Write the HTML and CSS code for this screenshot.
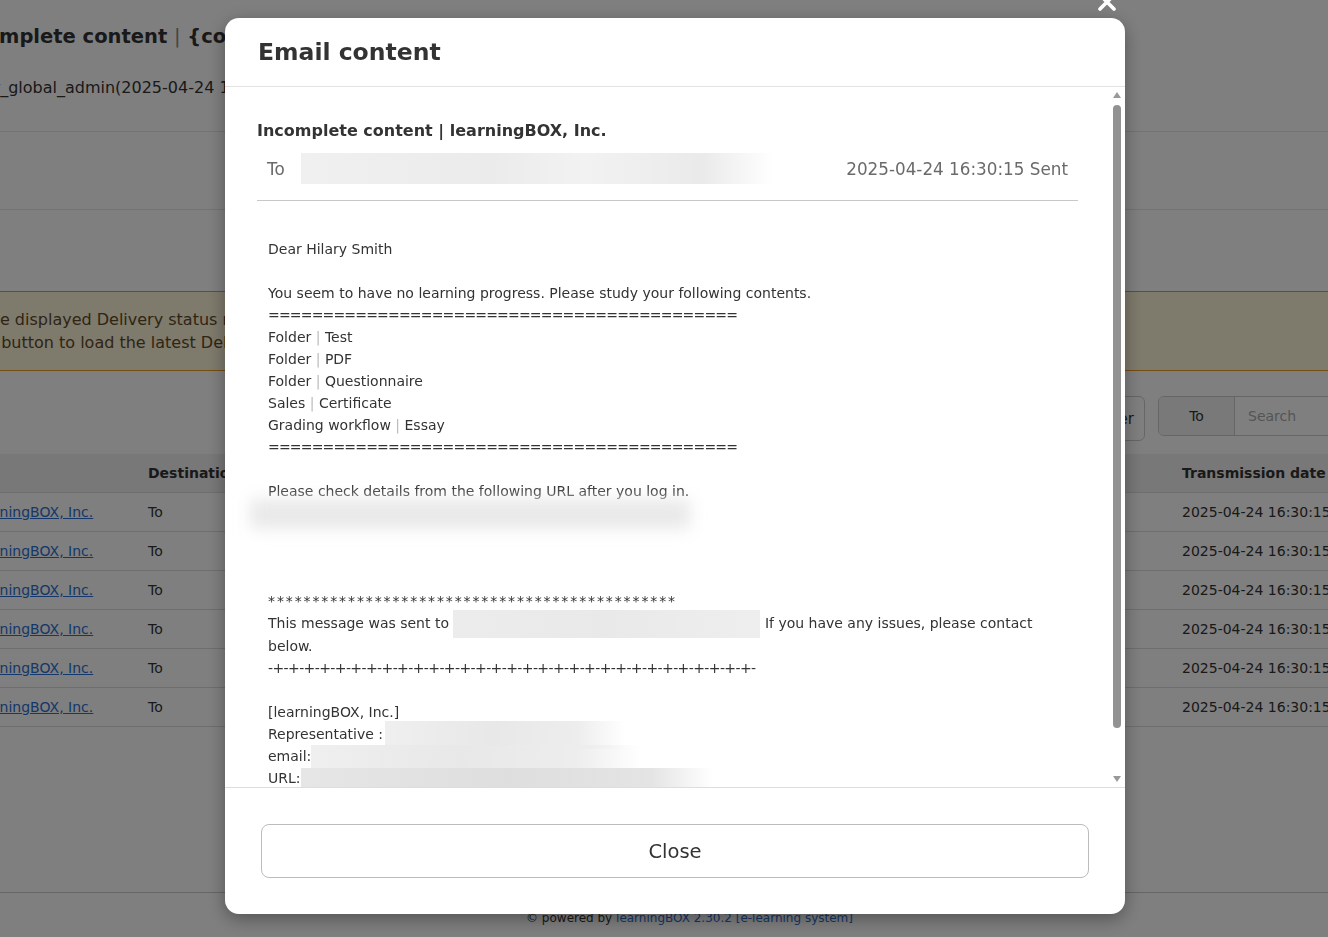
FILE: index.html
```html
<!DOCTYPE html>
<html lang="en">
<head>
    <meta charset="UTF-8">
    <meta name="viewport" content="width=device-width, initial-scale=1.0">
    <title>Email delivery status</title>
    <link rel="stylesheet" href="styles.css">
</head>
<body>
    <div class="page">
        <h2 class="page-title">Incomplete content <span class="sep">|</span> {contents name}</h2>
        <p class="sender">tester_global_admin(2025-04-24 16:30:15)</p>

        <div class="summary"></div>

        <div class="alert">
            The displayed Delivery status may not be the latest.<br>
            to button to load the latest Delivery status.
        </div>

        <div class="toolbar">
            <button class="btn-filter">Filter</button>
            <div class="search-group">
                <span class="search-type">To</span>
                <input class="search-input" type="text" placeholder="Search">
            </div>
        </div>

        <table class="list">
            <thead>
                <tr><th class="col-subject"></th><th class="col-dest">Destination</th><th>Transmission date</th></tr>
            </thead>
            <tbody>
                <tr><td><a href="#">learningBOX, Inc.</a></td><td>To</td><td>2025-04-24 16:30:15</td></tr>
                <tr><td><a href="#">learningBOX, Inc.</a></td><td>To</td><td>2025-04-24 16:30:15</td></tr>
                <tr><td><a href="#">learningBOX, Inc.</a></td><td>To</td><td>2025-04-24 16:30:15</td></tr>
                <tr><td><a href="#">learningBOX, Inc.</a></td><td>To</td><td>2025-04-24 16:30:15</td></tr>
                <tr><td><a href="#">learningBOX, Inc.</a></td><td>To</td><td>2025-04-24 16:30:15</td></tr>
                <tr><td><a href="#">learningBOX, Inc.</a></td><td>To</td><td>2025-04-24 16:30:15</td></tr>
            </tbody>
        </table>
    </div>

    <footer class="site-footer">
        © powered by <a href="#">learningBOX 2.30.2 [e-learning system]</a>
    </footer>

    <div class="backdrop"></div>

    <div class="modal">
        <button class="modal-close" aria-label="Close">
            <svg width="20" height="20" viewBox="0 0 20 20"><path d="M3 3 L17 17 M17 3 L3 17" stroke="#fff" stroke-width="3.6" stroke-linecap="round"/></svg>
        </button>
        <div class="modal-header">
            <h3 class="modal-title">Email content</h3>
        </div>
        <div class="modal-body">
            <div class="mail">
                <h4 class="mail-subject">Incomplete content | learningBOX, Inc.</h4>
                <div class="mail-meta">
                    <span>To</span>
                    <span class="redact redact-to"></span>
                    <span class="mail-date">2025-04-24 16:30:15 Sent</span>
                </div>
                <div class="mail-rule"></div>
                <div class="mail-text">Dear Hilary Smith

You seem to have no learning progress. Please study your following contents.
<span class="line-eq">===========================================</span>
Folder <span class="sep">|</span> Test
Folder <span class="sep">|</span> PDF
Folder <span class="sep">|</span> Questionnaire
Sales <span class="sep">|</span> Certificate
Grading workflow <span class="sep">|</span> Essay
<span class="line-eq">===========================================</span>

Please check details from the following URL after you log in.
<span class="redact redact-url"></span>



<span class="line-star">**********************************************</span>
This message was sent to <span class="redact redact-mail"></span> If you have any issues, please contact below.
<span class="line-dash">-+-+-+-+-+-+-+-+-+-+-+-+-+-+-+-+-+-+-+-+-+-+-+-+-+-+-+-+-+-+-+-</span>

[learningBOX, Inc.]
Representative :<span class="redact redact-rep"></span>
email:<span class="redact redact-email"></span>
URL:<span class="redact redact-site"></span>
<span class="line-dash">-+-+-+-+-+-+-+-+-+-+-+-+-+-+-+-+-+-+-+-+-+-+-+-+-+-+-+-+-+-+-+-</span></div>
            </div>
            <div class="scrollbar">
                <span class="scroll-up"></span>
                <span class="scroll-thumb"></span>
                <span class="scroll-down"></span>
            </div>
        </div>
        <div class="modal-footer">
            <button class="btn-close">Close</button>
        </div>
    </div>
</body>
</html>
```

FILE: styles.css
```css
html, body {
    overflow: hidden;
}
body {
    margin: 0;
    padding: 0;
    background-color: #fff;
    color: #333;
    font-family: "DejaVu Sans", Verdana, sans-serif;
}

/* page behind the dialog */
.page {
    width: 1460px;
    margin-left: -47px;
    padding-top: 24px;
    box-sizing: border-box;
    min-height: calc(100vh - 45px);
}
.page-title {
    font-size: 19.5px;
    line-height: 26px;
    margin: 0;
    color: #333;
}
.page-title .sep {
    font-weight: normal;
    color: #888;
}
.sender {
    font-size: 16px;
    line-height: 24px;
    margin: 26px 0 0;
}
.summary {
    margin-top: 31px;
    height: 77px;
    border-top: 1px solid #e6e6e6;
    border-bottom: 1px solid #e6e6e6;
}
.alert {
    margin-top: 81px;
    padding: 16px 27px;
    height: 46px;
    background-color: #fdf5d8;
    border-top: 1px solid #e89a20;
    border-bottom: 1px solid #e89a20;
    color: #5e4a2a;
    font-size: 16px;
    line-height: 23px;
}
.toolbar {
    display: flex;
    justify-content: flex-end;
    align-items: flex-start;
    gap: 13px;
    margin-top: 25px;
}
.btn-filter {
    height: 45px;
    padding: 0 10px;
    background: #fff;
    border: 1px solid #ccc;
    border-radius: 6px;
    font-family: inherit;
    font-size: 15px;
    color: #333;
}
.search-group {
    display: flex;
    width: 255px;
    height: 40px;
    box-sizing: border-box;
    border: 1px solid #ccc;
    border-radius: 6px;
    overflow: hidden;
}
.search-type {
    flex: 0 0 75px;
    display: flex;
    align-items: center;
    justify-content: center;
    background: #f2f2f2;
    border-right: 1px solid #ccc;
    font-size: 14px;
}
.search-input {
    flex: 1;
    min-width: 0;
    border: 0;
    padding: 0 13px;
    font-family: inherit;
    font-size: 14px;
}
.search-input::placeholder {
    color: #aaa;
}
.list {
    margin-top: 13px;
    margin-left: 10px;
    border-collapse: collapse;
    font-size: 14px;
}
.list th {
    height: 38px;
    padding: 0 10px;
    text-align: left;
    background: #f0f0f0;
    color: #333;
}
.list td {
    height: 38px;
    padding: 0 10px;
    border-top: 1px solid #ddd;
}
.list tr:last-child td {
    border-bottom: 1px solid #ddd;
}
.list .col-subject {
    width: 155px;
}
.list .col-dest {
    width: 1014px;
}
.list a {
    color: #2d6fd2;
}
.site-footer {
    height: 45px;
    border-top: 1px solid #ccc;
    padding-left: 51px;
    text-align: center;
    font-size: 12px;
    line-height: 18px;
    padding-top: 16px;
    box-sizing: border-box;
    color: #333;
}
.site-footer a {
    color: #2d6fd2;
    text-decoration: none;
}

/* dialog */
.backdrop {
    position: fixed;
    inset: 0;
    background: rgba(0, 0, 0, 0.5);
}
.modal {
    position: fixed;
    top: 18px;
    left: 225px;
    width: 900px;
    height: 896px;
    background: #fff;
    border-radius: 14px;
    box-shadow: 0 5px 18px rgba(0, 0, 0, 0.35);
    display: flex;
    flex-direction: column;
}
.modal-close {
    position: absolute;
    top: -26px;
    right: 8px;
    padding: 0;
    border: 0;
    background: none;
    width: 20px;
    height: 20px;
}
.modal-header {
    height: 69px;
    box-sizing: border-box;
    padding: 0 33px;
    display: flex;
    align-items: center;
    border-bottom: 1px solid #e2e2e2;
}
.modal-title {
    margin: 0;
    font-size: 23.5px;
    color: #333;
}
.modal-body {
    position: relative;
    flex: 1;
    overflow: hidden;
}
.mail {
    padding: 32px 47px 0 32px;
}
.mail-subject {
    margin: 0;
    font-size: 16px;
    line-height: 24px;
    color: #333;
}
.mail-meta {
    display: flex;
    align-items: center;
    height: 31px;
    margin-top: 10px;
    padding: 0 10px;
    font-size: 16.8px;
    color: #6a6a6a;
}
.mail-date {
    margin-left: auto;
}
.mail-rule {
    margin-top: 16px;
    border-top: 1px solid #c8c8c8;
}
.mail-text {
    margin-top: 37px;
    padding: 0 10px 0 11px;
    font-size: 14px;
    line-height: 22px;
    white-space: pre-line;
    color: #333;
}
.mail-text .sep {
    color: #bbb;
}
.line-eq {
    letter-spacing: -0.82px;
}
.line-star {
    letter-spacing: 1.89px;
}
.line-dash {
    letter-spacing: -0.6px;
}
.redact {
    display: inline-block;
    vertical-align: middle;
    background: linear-gradient(90deg, #efefef, #e8e8e8 45%, #ededed 80%, rgba(255, 255, 255, 0));
}
.redact-to {
    width: 472px;
    height: 31px;
    margin-left: 16px;
    background: linear-gradient(90deg, #f0f0f0, #ebebeb 40%, #f2f2f2 60%, #eaeaea 85%, #fff);
}
.redact-url {
    width: 440px;
    height: 30px;
    margin: -6px 0 -6px -18px;
    background: #e9e9e9;
    filter: blur(8px);
}
.redact-mail {
    width: 307px;
    height: 28px;
    margin: -3px 0;
    background: linear-gradient(90deg, #ececec, #e9e9e9 50%, #eeeeee);
}
.redact-rep {
    width: 240px;
    height: 28px;
    margin: -4px 0 -4px 2px;
}
.redact-email {
    width: 330px;
    height: 24px;
    margin: -2px 0;
}
.redact-site {
    width: 412px;
    height: 22px;
    margin: -1px 0;
    background: linear-gradient(90deg, #e6e6e6, #dedede 50%, #e4e4e4 85%, rgba(255, 255, 255, 0));
}

.scrollbar {
    position: absolute;
    top: 0;
    right: 4px;
    bottom: 0;
    width: 8px;
    display: flex;
    flex-direction: column;
    align-items: center;
}
.scroll-up {
    margin-top: 5px;
    border-left: 4.5px solid transparent;
    border-right: 4.5px solid transparent;
    border-bottom: 6px solid #999;
}
.scroll-thumb {
    margin-top: 7px;
    width: 8px;
    height: 623px;
    border-radius: 4px;
    background: #929292;
}
.scroll-down {
    margin-top: auto;
    margin-bottom: 5px;
    border-left: 4.5px solid transparent;
    border-right: 4.5px solid transparent;
    border-top: 6px solid #999;
}
.modal-footer {
    border-top: 1px solid #ddd;
    padding: 36px;
}
.btn-close {
    display: block;
    width: 100%;
    height: 54px;
    background: #fff;
    border: 1px solid #bcbcbc;
    border-radius: 8px;
    font-family: inherit;
    font-size: 19.5px;
    color: #333;
}
```
